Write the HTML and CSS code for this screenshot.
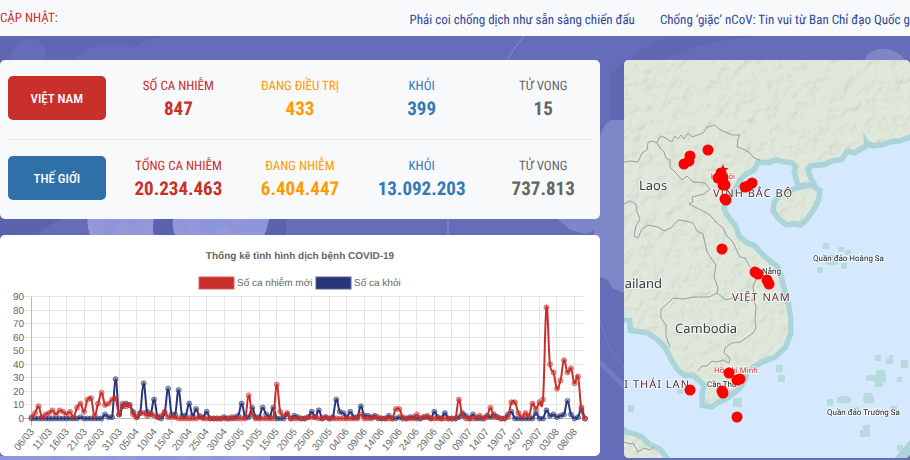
FILE: index.html
```
<!DOCTYPE html>
<html lang="vi">
<head>
    <meta charset="UTF-8">
    <meta name="viewport" content="width=device-width, initial-scale=1.0">
    <title>COVID-19</title>
    <link rel="stylesheet" href="styles.css">
</head>
<body>
    <svg class="backdrop" viewBox="0 0 910 460" preserveAspectRatio="xMidYMid slice" aria-hidden="true">
        <defs>
            <filter id="cells" x="0" y="0" width="100%" height="100%">
                <feTurbulence type="fractalNoise" baseFrequency="0.06" numOctaves="4" seed="8"/>
                <feColorMatrix values="0 0 0 0 .3  0 0 0 0 .32  0 0 0 0 .66  5 0 0 0 -2"/>
                <feComposite in2="SourceGraphic" operator="in" result="n"/>
                <feMerge><feMergeNode in="SourceGraphic"/><feMergeNode in="n"/></feMerge>
            </filter>
        </defs>
        <path fill="#5f67b2" d="M0 36h165q-20 2-30 12-20-8-40-2-20 8-26 20H46Q48 40 30 38 14 42 8 62H0z"/>
        <path fill="#5b63ae" d="M0 215h80q-28 4-42 20H0zM150 215h136v24H150z"/>
        <g fill="#8d95dc" filter="url(#cells)">
            <path d="M88 214h67q-4 14 0 26H92q-6-14-4-26z"/>
            <path d="M174 214h96q-2 14-8 26h-84q-8-12-4-26z"/>
            <path d="M0 456h270v8H0z"/>
        </g>
        <path fill="#7d86c7" d="M600 136q8-24 26-16v174l-14-6-4-8-10-4-4-8V230l-8 4-16-4-16-14h46z"/>
        <path fill="#7d86c7" d="M864 62q2-10 14-13 18-2 28 12v3h-42z"/>
        <path fill="none" stroke="#878fd0" stroke-width="1" d="M524 36q-14 16-22 34M448 218v20"/>
        <path fill="none" stroke="#757dc2" stroke-width="1" d="M600 320q8 32 26 50"/>
        <path fill="none" stroke="#757dc2" stroke-width="5" d="M600 362l26 26"/>
        <path fill="#5f67b3" d="M610 120V76q20-24 60-40h90q-60 4-100 26h-24v58z"/>
    </svg>

    <header class="topbar">
        <span class="updated">CẬP NHẬT:</span>
        <nav class="ticker">
            <a href="#">Phải coi chống dịch như sẵn sàng chiến đấu</a>
            <a href="#">Chống ‘giặc’ nCoV: Tin vui từ Ban Chỉ đạo Quốc gia</a>
        </nav>
    </header>

    <main class="board">
        <div class="left">
            <section class="stats">
                <div class="stat-row">
                    <button class="btn btn-vn" type="button">VIỆT NAM</button>
                    <div class="stat red"><span>SỐ CA NHIỄM</span><b>847</b></div>
                    <div class="stat orange"><span>ĐANG ĐIỀU TRỊ</span><b>433</b></div>
                    <div class="stat blue"><span>KHỎI</span><b>399</b></div>
                    <div class="stat gray"><span>TỬ VONG</span><b>15</b></div>
                </div>
                <hr>
                <div class="stat-row">
                    <button class="btn btn-world" type="button">THẾ GIỚI</button>
                    <div class="stat red"><span>TỔNG CA NHIỄM</span><b>20.234.463</b></div>
                    <div class="stat orange"><span>ĐANG NHIỄM</span><b>6.404.447</b></div>
                    <div class="stat blue"><span>KHỎI</span><b>13.092.203</b></div>
                    <div class="stat gray"><span>TỬ VONG</span><b>737.813</b></div>
                </div>
            </section>

            <section class="chart">
                <svg id="chart" viewBox="0 0 600 221">
                    <text class="chart-title" x="300" y="24">Thống kê tình hình dịch bệnh COVID-19</text>
                    <rect class="new-box" x="199" y="42" width="35" height="12"/>
                    <text class="legend" x="237" y="51">Số ca nhiễm mới</text>
                    <rect class="cured-box" x="316" y="42" width="35" height="12"/>
                    <text class="legend" x="354" y="51">Số ca khỏi</text>
                    <g id="plot"></g>
                </svg>
            </section>
        </div>

        <section class="map">
            <svg viewBox="0 0 286 398" preserveAspectRatio="xMidYMid slice">
                <defs>
                    <path id="mainland" d="M-10-10H300V72L286 74 276 78 266 79 258 82 249 83 244 80 239 72 240 84 230 90 222 88 216 97 208 98 199 102 186 103 181 108 183 116 186 122 176 123 173 112 175 106 169 100 160 99 153 97 144 100 133 99 128 108 120 112 114 118 110 126 103 135 99 142 97 149 101 157 109 167 113 178 121 185 129 188 136 196 143 202 152 209 154 215 156 223 159 236 162 246 164 258 164 273 159 286 149 295 138 299 129 304 121 310 119 318 113 327 103 335 93 340 87 344 81 343 81 333 84 324 76 318 70 312 62 313 56 308 50 299 44 287 36 278 24 270 9 268 8 258-10 257z"/>
                    <path id="hainan" d="M153 143L159 136 166 133 176 130 186 128 193 132 192 139 188 147 182 156 176 162 170 161 163 162 156 156 152 150z"/>
                    <path id="malaysia" d="M-10 364L0 374 8 376 16 379 24 387 34 391 41 400H-10z"/>
                    <filter id="relief" x="0" y="0" width="100%" height="100%">
                        <feTurbulence type="fractalNoise" baseFrequency="0.08" numOctaves="3" seed="5"/>
                        <feDiffuseLighting surfaceScale="3" lighting-color="#fff" diffuseConstant="1.150">
                            <feDistantLight azimuth="225" elevation="60"/>
                        </feDiffuseLighting>
                        <feComposite in2="SourceGraphic" operator="in"/>
                    </filter>
                </defs>
                <rect width="286" height="398" fill="#d4e9fe"/>
                <g class="shore">
                    <use href="#mainland"/>
                    <use href="#hainan"/>
                    <use href="#malaysia"/>
                    <path d="M276 400l12-14v14z"/>
                </g>
                <g class="reefs">
                    <path d="M199 183h6v6h-6zM214 187h6v5h-6zM202 195h12v10h-12zM221 190h6v5h-6zM193 207h6v6h-6zM217 203h6v6h-6z"/>
                    <path d="M251 295h6v6h-6zM265 295h4v9h-7v-6h3zM277 300h7v8h-7zM273 317h5v5h-5zM252 310h9v4h1v8h-3v5h-8v-6h-9v-6h10zM203 339h6v7h-6zM213 337h4v-1h7v1h3v6h-14zM240 333h8v3h2v7h-10v-2h-1zM267 346h6v5h-6zM229 347h6v5h-6zM239 365h7v12h-10v-7h3zM273 385h6v6h-6z"/>
                    <path d="M109 338h9v9h-9zM152 305h7v7h-7zM154 315h7v7h-7zM4 345h6v7H4zM53 328h6v6h-6z"/>
                </g>
                <g fill="#e0e8db">
                    <use href="#mainland"/>
                    <use href="#hainan"/>
                    <use href="#malaysia"/>
                </g>
                <g class="terrain">
                    <g filter="url(#relief)">
                        <use href="#mainland"/>
                        <use href="#hainan"/>
                        <use href="#malaysia"/>
                    </g>
                </g>
                <g class="borders">
                    <path d="M0 102L7 101 14 102 18 93 23 90 24 82 28 81 33 83 35 78 38 76 48 82 51 76 54 79 57 75 60 79 64 73 68 77 79 73 83 67 91 65 95 69 101 72 109 75 116 75 114 79 113 87 117 88 126 93 130 98 136 100"/>
                    <path d="M33 83L36 88 40 92 42 98 46 100 46 107 52 113 58 120 63 116 69 122 81 123 86 129 80 134 68 137 69 142 65 144 77 150 86 155 92 162 99 168 103 176 109 182 112 189 116 197 121 198 126 207 131 211 132 220 129 226 130 234 129 240 132 246 131 260 132 268 129 273 122 278 116 282 108 283 101 288 100 293 106 298 105 303 99 300 93 302 88 301 83 306 78 306 74 311"/>
                    <path d="M0 144L6 141 12 144 13 152 16 159 12 166 10 176 14 178 18 169 24 165 34 167 40 171 47 168 54 160 62 161 69 163 73 171 79 174 81 183 83 192 92 205 90 217 94 228 93 233 85 237 69 237 60 239 49 238 43 244 37 249 37 258 42 265 42 276 46 287"/>
                    <path d="M93 233L102 240 112 237 120 241 129 240M0 382L6 384 9 383 14 392 20 388 26 390 30 387"/>
                </g>
                <g class="country">
                    <text x="15" y="130">Laos</text>
                    <text x="38" y="228" text-anchor="end">ailand</text>
                    <text x="51" y="273">Cambodia</text>
                </g>
                <g class="region">
                    <text x="89" y="137">VỊNH BẮC BỘ</text>
                    <text x="108" y="241">VIỆT NAM</text>
                    <text x="66" y="328" text-anchor="end">I THÁI LAN</text>
                </g>
                <g class="city">
                    <text x="157" y="214" text-anchor="end">Đà Nẵng</text>
                    <text x="83" y="327">Cần Thơ</text>
                    <text x="189" y="201">Quần đảo Hoàng Sa</text>
                    <text x="203" y="355">Quần đảo Trường Sa</text>
                    <text class="big" x="111" y="119" text-anchor="end">Hà Nội</text>
                    <text class="big" x="90" y="313">Hồ Chí Minh</text>
                </g>
                <g id="cases" fill="red">
                    <path d="M99 104l1.500 4h4l-3 2.500 1 4-3.500-2-3.500 2 1-4-3-2.500h4z"/>
                </g>
            </svg>
        </section>
    </main>

    <script src="script.js"></script>
</body>
</html>
```
FILE: styles.css
```
*{
    margin: 0;
    padding: 0;
    box-sizing: border-box;
}
body{
    background: #656db8;
    font-family: "Roboto Condensed", Roboto, sans-serif;
    font-size: 13px;
    text-rendering: geometricPrecision;
    overflow-x: hidden;
}
.backdrop{
    position: fixed;
    top: 0;
    left: 0;
    width: 100%;
    height: 100%;
    z-index: -1;
}

.topbar{
    display: flex;
    align-items: center;
    height: 36px;
    background: #f8f9fb;
    overflow: hidden;
    white-space: nowrap;
}
.updated{
    color: #c9302c;
    width: 45%;
    flex-shrink: 0;
}
.ticker{
    display: flex;
    gap: 25px;
    padding-top: 4px;
}
.ticker a{
    color: #2f4796;
    text-decoration: none;
}

.board{
    display: grid;
    grid-template-columns: 300fr 143fr;
    align-items: start;
    gap: 24px;
    padding-top: 24px;
}
.left{
    display: grid;
    gap: 16px;
    min-width: 0;
}

.stats{
    background: #f8f9fb;
    border-radius: 5px;
    padding: 16px 0 19px;
}
.stats hr{
    border: 0;
    border-top: 1px solid #ebecee;
    margin: 19px 8px 16px;
}
.stat-row{
    display: grid;
    grid-template-columns: repeat(5, 1fr);
    margin: 0 -4px;
}
.btn{
    height: 44px;
    margin: 0 12px;
    border: 0;
    border-radius: 5px;
    color: #fff;
    font-family: inherit;
    font-size: 13px;
    font-weight: 500;
    cursor: pointer;
}
.btn-vn{
    background: #c9302c;
}
.btn-world{
    background: #2f70a9;
}
.stat{
    text-align: center;
    line-height: 21px;
}
.stat span, .stat b{
    display: block;
}
.stat b{
    font-size: 19px;
    line-height: 23px;
}
.red{
    color: #c9302c;
}
.orange{
    color: #ff9b05;
}
.blue{
    color: #337ab7;
}
.gray{
    color: #666;
}

.chart{
    background: #fff;
    border-radius: 5px;
}
.chart svg, .map svg{
    display: block;
    width: 100%;
    height: auto;
}
.chart text{
    font-family: "Liberation Sans", Arial, sans-serif;
    font-size: 10px;
    fill: #666;
}
.chart .chart-title{
    font-weight: bold;
    text-anchor: middle;
}
.new-box{
    fill: #c9302c;
    stroke: #d9605c;
}
.cured-box{
    fill: #283577;
    stroke: #5a6498;
}
.grid{
    stroke: #e5e5e5;
}
.axis{
    stroke: #bababa;
}
.line{
    fill: none;
    stroke-width: 2px;
    stroke-linejoin: round;
}
.new .line{
    stroke: #c9302c;
}
.cured .line{
    stroke: #283577;
}
.new circle{
    fill: rgba(201, 48, 44, 0.400);
    stroke: rgba(201, 48, 44, 0.600);
}
.cured circle{
    fill: rgba(40, 53, 119, 0.400);
    stroke: rgba(40, 53, 119, 0.600);
}

.map{
    border-radius: 5px;
    overflow: hidden;
}
.shore{
    fill: #aad4d8;
    stroke: #aad4d8;
    stroke-width: 11px;
}
.reefs{
    fill: #b7dadd;
}
.terrain{
    mix-blend-mode: multiply;
    opacity: 0.300;
}
.borders{
    fill: none;
    stroke: #9c99a3;
    stroke-width: 1px;
}
.map text{
    paint-order: stroke;
    stroke: rgba(255, 255, 255, 0.700);
    stroke-width: 2px;
}
.country{
    font-family: "Noto Sans", sans-serif;
    font-size: 13px;
    fill: #3a3a3f;
}
.region{
    font-family: "Noto Sans", sans-serif;
    font-size: 11px;
    letter-spacing: 1px;
    fill: #5b2f37;
}
.city{
    font-family: Roboto, sans-serif;
    font-size: 8px;
    fill: #26262c;
}
.city .big{
    fill: #d8383c;
}
```
FILE: script.js
```
// daily numbers from 06/03 to 11/08
const newCases = [
    1,4,9,1,3,4,6,3,6,5,3,5,1,8,11,5,14,15,2,11,19,10,11,14,15,3,11,9,10,3,
    1,4,4,2,4,2,1,2,5,1,1,1,0,0,0,0,0,0,2,0,0,0,0,0,0,0,0,1,0,0,
    0,0,17,3,0,0,0,0,0,0,25,5,2,4,0,0,0,0,0,1,1,1,0,0,1,0,0,0,0,0,
    0,0,0,0,3,0,0,0,1,1,0,0,0,0,7,7,1,0,0,0,3,0,1,2,0,0,0,0,0,0,
    0,0,14,2,0,0,0,1,2,0,1,8,1,1,0,0,1,12,12,4,1,4,2,11,7,12,14,82,40,34,
    22,28,43,34,37,26,31,6,0
];
const cured = [
    0,0,0,0,0,0,0,0,0,0,0,0,0,0,1,0,0,0,0,0,0,3,1,1,29,3,9,11,10,5,
    1,4,26,5,3,14,1,0,4,22,3,3,21,2,2,11,2,7,1,1,5,0,0,0,0,1,0,0,1,2,
    11,1,1,8,1,1,8,3,1,8,0,0,0,3,0,2,1,0,0,1,5,1,6,0,1,0,1,14,5,4,
    1,5,1,1,9,2,2,1,2,0,0,0,2,0,0,1,0,0,1,1,0,0,1,1,0,5,1,0,4,0,
    0,0,1,4,2,0,3,0,0,0,2,1,3,1,0,0,3,5,0,0,0,0,0,0,4,0,0,6,2,3,
    1,2,3,13,3,0,1,8,0
];

const left = 31.5, top0 = 61.5, bottom = 183.5, right = 585;
const step = (right - left) / (newCases.length - 1);
const px = i => left + i * step;
const py = v => bottom - v * (bottom - top0) / 90;
const plot = document.getElementById("plot");
let out = "";

for (let v = 0; v <= 90; v += 10) {
    const y = Math.floor(py(v)) + 0.5;
    out += `<path class="${v ? "grid" : "axis"}" d="M24 ${y}H${right}"/>`;
    out += `<text x="24" y="${y + 3}" text-anchor="end">${v}</text>`;
}
const day = new Date(2020, 2, 6);
for (let i = 0; i < newCases.length; i += 5) {
    const x = Math.floor(px(i)) + 0.5;
    const label = String(day.getDate()).padStart(2, "0") + "/" + String(day.getMonth() + 1).padStart(2, "0");
    out += `<path class="${i ? "grid" : "axis"}" d="M${x} ${top0}V191"/>`;
    out += `<text transform="translate(${x + 3} 197) rotate(-50)" text-anchor="end">${label}</text>`;
    day.setDate(day.getDate() + 5);
}

function series(name, data) {
    const p = data.map((v, i) => [px(i), py(v)]);
    const clamp = y => Math.min(bottom, Math.max(top0, y));
    let d = `M${p[0]}`;
    for (let i = 1; i < p.length; i++) {
        const a = p[i - 1], b = p[i], before = p[i - 2] || a, after = p[i + 1] || b;
        const c1 = clamp(a[1] + (b[1] - before[1]) * 0.15);
        const c2 = clamp(b[1] - (after[1] - a[1]) * 0.15);
        d += `C${a[0] + step * 0.4} ${c1} ${b[0] - step * 0.4} ${c2} ${b}`;
    }
    const dots = p.map(q => `<circle cx="${q[0]}" cy="${q[1]}" r="2.5"/>`).join("");
    return `<g class="${name}"><path class="line" d="${d}"/>${dots}</g>`;
}
plot.innerHTML = out + series("cured", cured) + series("new", newCases);

// places with recorded cases
const cases = [
    [84,90],[66,96],[65,101],[60,104],[97,113],[94,118],[99,118],[99,125],[101,125],
    [101,139],[102,140],[121,127],[124,126],[128,123],[98,189],[131,212],[134,214],
    [143,220],[145,224],[105,313],[113,320],[116,319],[66,330],[98,331],[99,333],[113,357]
];
document.getElementById("cases").innerHTML += cases.map(c => `<circle cx="${c[0]}" cy="${c[1]}" r="5.5"/>`).join("");
```
